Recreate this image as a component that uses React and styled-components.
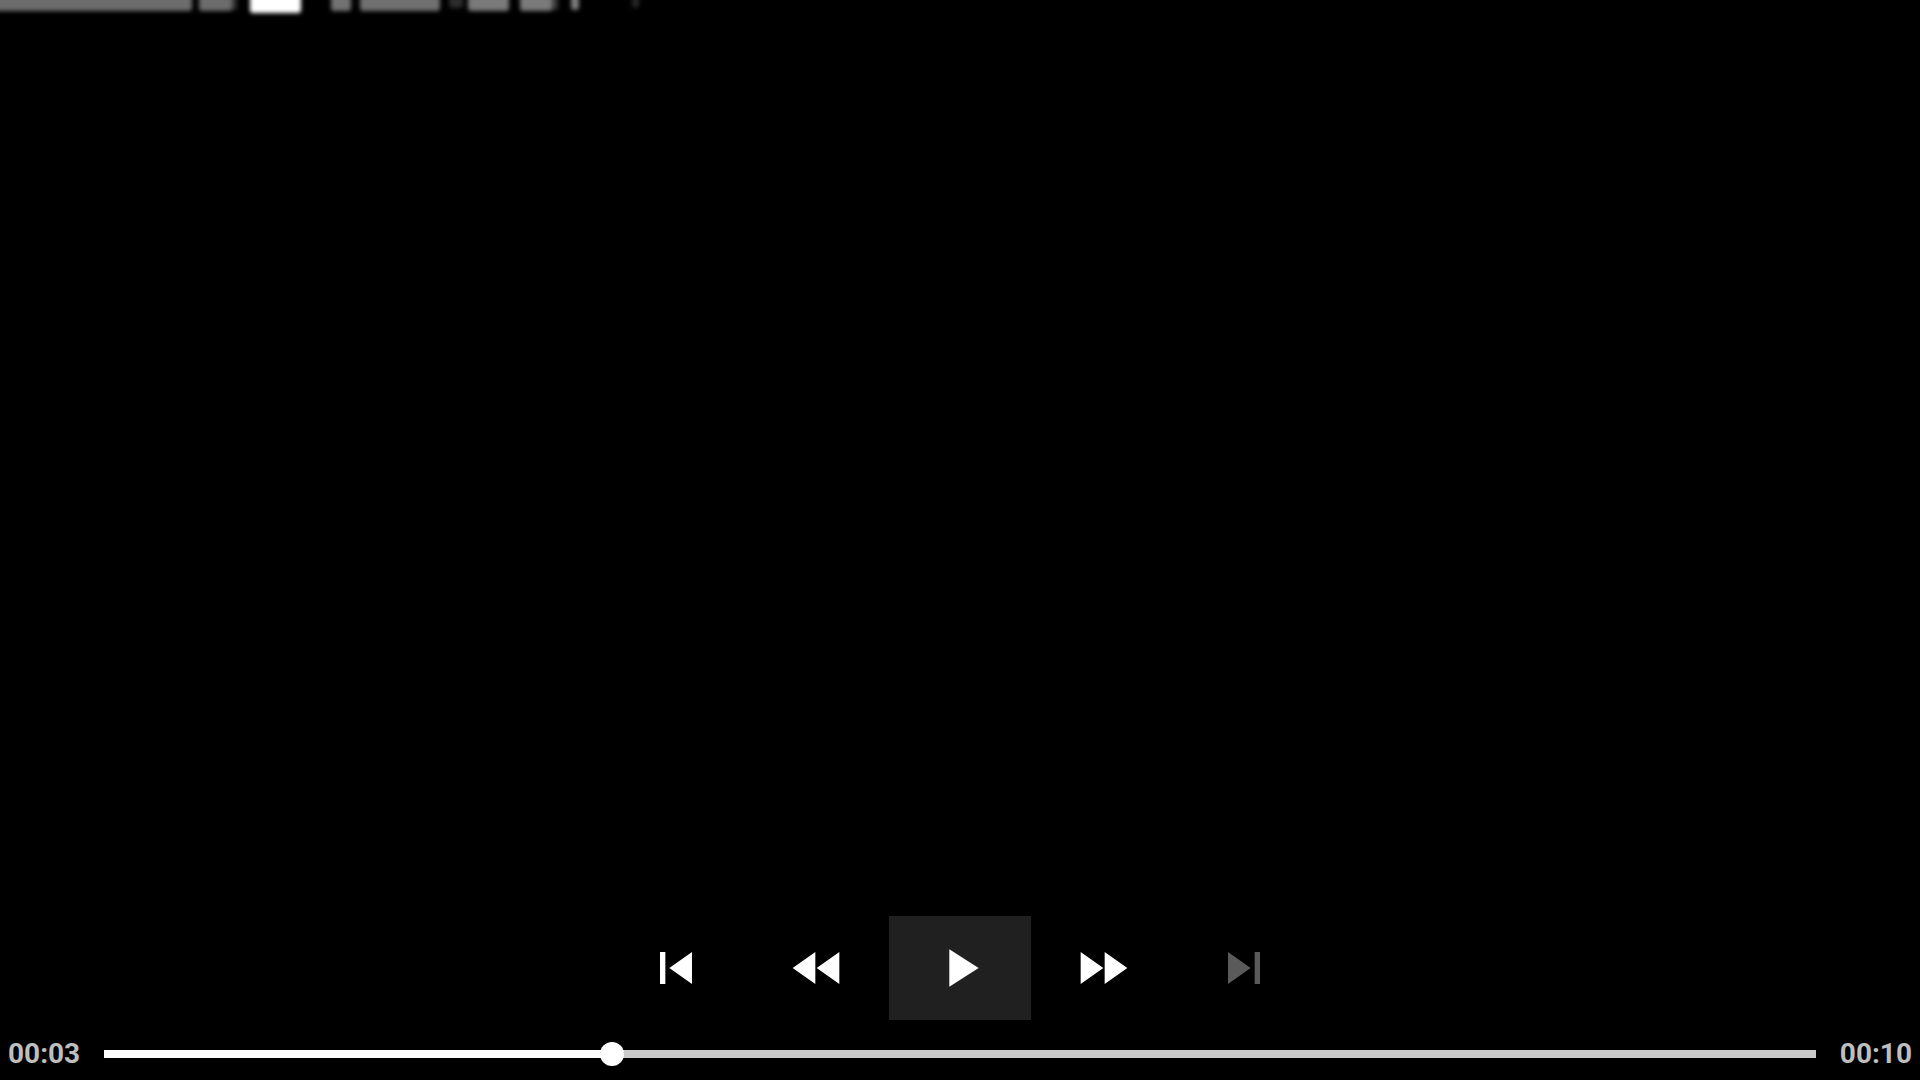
import React, { useState } from 'react';
import styled, { createGlobalStyle } from 'styled-components';

const DURATION = 10;

// Blurred remains of the video picture along the top edge
const smudges = [
  { x: -20, width: 212, height: 23, fill: '#6c6c6c' },
  { x: 206, width: 31, height: 22, fill: '#303030' },
  { x: 199, width: 33, height: 23, fill: '#6c6c6c' },
  { x: 250, width: 51, height: 25, fill: '#ffffff' },
  { x: 331, width: 20, height: 23, fill: '#727272' },
  { x: 360, width: 80, height: 23, fill: '#707070' },
  { x: 449, width: 14, height: 20, fill: '#2c2c2c' },
  { x: 468, width: 41, height: 23, fill: '#7a7a7a' },
  { x: 528, width: 30, height: 22, fill: '#3a3a3a' },
  { x: 520, width: 32, height: 23, fill: '#7a7a7a' },
  { x: 571, width: 8, height: 22, fill: '#7c7c7c' },
  { x: 632, width: 7, height: 20, fill: '#262626' },
];

const buttons = [
  { label: 'Previous', path: 'M6 6h2v12H6zm3.5 6l8.5 6V6z' },
  { label: 'Rewind', path: 'M11 18V6l-8.5 6 8.5 6zm.5-6l8.5 6V6l-8.5 6z' },
  { label: 'Play', path: 'M8 5v14l11-7z', active: true },
  { label: 'Fast forward', path: 'M4 18l8.5-6L4 6v12zm9-12v12l8.5-6L13 6z' },
  { label: 'Next', path: 'M6 18l8.5-6L6 6v12zM16 6v12h2V6h-2z', disabled: true },
];

function formatTime(seconds) {
  const total = Math.round(seconds);
  const mm = String(Math.floor(total / 60)).padStart(2, '0');
  const ss = String(total % 60).padStart(2, '0');
  return `${mm}:${ss}`;
}

function VideoFrame() {
  return (
    <Frame>
      <svg width="660" height="24" viewBox="0 0 660 24" aria-hidden="true">
        <defs>
          <filter
            id="soft"
            filterUnits="userSpaceOnUse"
            x="-40"
            y="-20"
            width="700"
            height="50"
            colorInterpolationFilters="sRGB"
          >
            <feGaussianBlur stdDeviation="2" />
          </filter>
        </defs>
        <g filter="url(#soft)">
          {smudges.map((s) => (
            <rect
              key={s.x}
              x={s.x}
              y="-12"
              width={s.width}
              height={s.height}
              rx="3"
              fill={s.fill}
            />
          ))}
        </g>
      </svg>
    </Frame>
  );
}

function App() {
  const [position, setPosition] = useState(2.967);

  return (
    <>
      <GlobalStyle />
      <Player>
        <VideoFrame />
        <Controls>
          {buttons.map((b) => (
            <ControlButton
              key={b.label}
              type="button"
              aria-label={b.label}
              disabled={b.disabled}
              $active={b.active}
            >
              <svg viewBox="0 0 24 24" aria-hidden="true">
                <path d={b.path} />
              </svg>
            </ControlButton>
          ))}
        </Controls>
        <TimeRow>
          <Time>{formatTime(position)}</Time>
          <BarArea>
            <SeekBar
              type="range"
              aria-label="Seek"
              min="0"
              max={DURATION}
              step="0.001"
              value={position}
              onChange={(e) => setPosition(Number(e.target.value))}
              style={{ '--played': position / DURATION }}
            />
          </BarArea>
          <Time>{formatTime(DURATION)}</Time>
        </TimeRow>
      </Player>
    </>
  );
}

export default App;

// Styled Components
const GlobalStyle = createGlobalStyle`
  * {
    box-sizing: border-box;
  }

  body {
    margin: 0;
    background: #000000;
    font-family: Roboto, sans-serif;
  }
`;

const Player = styled.main`
  display: flex;
  flex-direction: column;
  min-height: 100vh;
  background: #000000;
`;

const Frame = styled.div`
  flex: 1;

  svg {
    display: block;
  }
`;

const Controls = styled.div`
  display: flex;
  justify-content: center;
`;

const ControlButton = styled.button`
  display: flex;
  align-items: center;
  justify-content: center;
  width: 142px;
  height: 104px;
  padding: 0;
  border: none;
  background: ${(props) => (props.$active ? '#202020' : 'transparent')};
  color: ${(props) => (props.disabled ? '#5a5a5a' : '#ffffff')};
  cursor: pointer;

  svg {
    width: 64px;
    height: 64px;
    fill: currentColor;
  }
`;

const TimeRow = styled.div`
  display: flex;
  align-items: center;
  height: 52px;
  margin-top: 8px;
  padding: 0 8px;
`;

const Time = styled.span`
  color: #bebebe;
  font-size: 28px;
  font-weight: 700;
  line-height: 32px;
`;

const BarArea = styled.div`
  display: flex;
  flex: 1;
  padding: 0 12px;
`;

/* The thumb is 24px wide, so the visible track is inset by half of that. */
const SeekBar = styled.input`
  --edge: calc(12px + (100% - 24px) * var(--played));
  flex: 1;
  min-width: 0;
  height: 24px;
  margin: 0;
  appearance: none;
  background: linear-gradient(
      to right,
      transparent 12px,
      #ffffff 12px,
      #ffffff var(--edge),
      #cbcbcb var(--edge),
      #cbcbcb calc(100% - 12px),
      transparent calc(100% - 12px)
    )
    center / 100% 8px no-repeat;
  cursor: pointer;

  &::-webkit-slider-thumb {
    appearance: none;
    width: 24px;
    height: 24px;
    border-radius: 50%;
    background: #ffffff;
  }
`;
